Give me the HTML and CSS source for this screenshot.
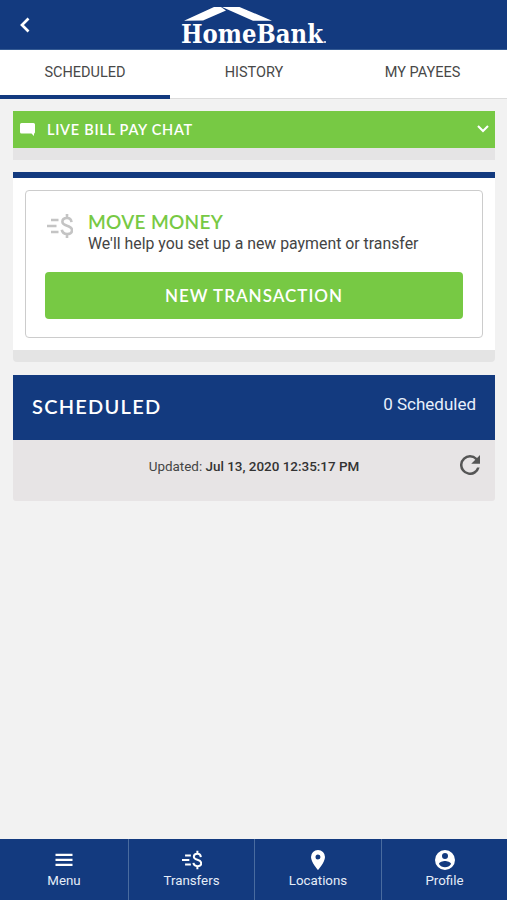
FILE: index.html
```html
<!DOCTYPE html>
<html lang="en">
<head>
<meta charset="utf-8">
<title>HomeBank Bill Pay</title>
<link rel="stylesheet" href="styles.css">
</head>
<body>
<svg class="defs" aria-hidden="true">
  <symbol id="money" viewBox="0 0 26 26">
    <g fill="none" stroke="currentColor" stroke-width="2.6">
      <path d="M4 7H11.500M0 13H9.500M4 19H11.500"/>
      <path d="M24.500 9.200C24.200 6.400 22.700 5 20 5C17 5 15.400 6.600 15.400 8.800C15.400 14 25 11.500 25 17.200C25 19.600 23 21 20.200 21C17 21 15.200 19.600 14.800 16.800M20 1V5M20 21V25"/>
    </g>
  </symbol>
</svg>
<div class="app">
  <header class="header">
    <svg class="back" viewBox="0 0 10 16"><path d="M8.500 1.500L2 8L8.500 14.500"/></svg>
    <svg class="logo" viewBox="0 0 150 46">
      <path d="M4 15.700L34 2H41L46 5.500L23 15.500ZM42 2H59.500L92 15.700H73Z"/>
      <text x="1" y="37.700" textLength="142" lengthAdjust="spacingAndGlyphs">HomeBank</text>
      <circle cx="145" cy="37" r="1"/>
    </svg>
  </header>
  <nav class="tabs">
    <a class="tab active">SCHEDULED</a>
    <a class="tab">HISTORY</a>
    <a class="tab">MY PAYEES</a>
  </nav>
  <main class="content">
    <section class="chat">
      <svg class="bubble" viewBox="0 0 15 13"><path d="M1.500 0H13.500Q15 0 15 1.500V9Q15 10.500 14 10.500V13L11.500 10.500H1.500Q0 10.500 0 9V1.500Q0 0 1.500 0Z"/></svg>
      <span class="chat-label">LIVE BILL PAY CHAT</span>
      <svg class="chevron" viewBox="0 0 12 8"><path d="M1 1L6 6L11 1"/></svg>
    </section>
    <section class="card">
      <div class="panel">
        <div class="intro">
          <svg class="money"><use href="#money"/></svg>
          <div>
            <h2 class="title">MOVE MONEY</h2>
            <p class="desc">We'll help you set up a new payment or transfer</p>
          </div>
        </div>
        <button class="button"><span>NEW TRANSACTION</span></button>
      </div>
    </section>
    <section class="scheduled">
      <div class="bar"><h2 class="bar-title">SCHEDULED</h2><span class="count">0 Scheduled</span></div>
      <div class="updated">
        <span class="stamp">Updated: <b>Jul 13, 2020 12:35:17 PM</b></span>
        <svg class="refresh" viewBox="4 4 16 16"><path d="M17.650 6.350A7.960 7.960 0 0 0 12 4a8 8 0 1 0 7.730 10h-2.080A6 6 0 1 1 12 6c1.660 0 3.140.690 4.220 1.780L13 11h7V4z"/></svg>
      </div>
    </section>
  </main>
  <footer class="footer">
    <a class="item"><svg class="icon" viewBox="0 0 20 20"><path d="M1.500 4.800H18.500M1.500 9.800H18.500M1.500 14.800H18.500" fill="none" stroke="currentColor" stroke-width="2.2"/></svg><span>Menu</span></a>
    <a class="item"><svg class="icon"><use href="#money"/></svg><span>Transfers</span></a>
    <a class="item"><svg class="icon" viewBox="2 2 20 20"><path d="M12 2a7 7 0 0 0-7 7c0 5.250 7 13 7 13s7-7.750 7-13a7 7 0 0 0-7-7zm0 9.500a2.500 2.500 0 1 1 0-5 2.500 2.500 0 0 1 0 5z"/></svg><span>Locations</span></a>
    <a class="item"><svg class="icon" viewBox="2 2 20 20"><path d="M12 2a10 10 0 1 0 0 20 10 10 0 0 0 0-20zm0 3a3 3 0 1 1 0 6 3 3 0 0 1 0-6zm0 14.200a7.200 7.200 0 0 1-6-3.220c.03-1.990 4-3.080 6-3.080 1.990 0 5.970 1.090 6 3.080a7.200 7.200 0 0 1-6 3.220z"/></svg><span>Profile</span></a>
  </footer>
</div>
</body>
</html>
```
FILE: styles.css
```css
* { box-sizing: border-box; }
body { margin: 0; font-family: Roboto, sans-serif; color: #444; background: #f2f2f2; }
h2, p { margin: 0; }
.defs { display: none; }
.app { display: flex; flex-direction: column; height: 900px; width: 507px; }
.header { height: 50px; background: #133a7f; border-bottom: 1px solid #355b94; display: grid; grid-template-columns: 180px 150px 1fr; align-items: start; }
.back { width: 10px; height: 16px; margin: 17px 0 0 20px; fill: none; stroke: #fff; stroke-width: 2.7; }
.logo { width: 150px; height: 46px; margin-top: 5px; fill: #fff; overflow: visible; }
.logo text { font: bold 26px "DejaVu Serif", serif; }
.tabs { display: grid; grid-template-columns: 170px 168px 169px; height: 49px; background: #fff; border-bottom: 1px solid #dcdcdc; }
.tab { height: 49px; text-align: center; font-size: 14.500px; line-height: 45px; color: #484848; }
.tab.active { border-bottom: 4px solid #133a7f; }
.content { flex: 1; padding: 12px 12px 0 13px; }
.chat { height: 49px; display: flex; align-items: center; padding: 0 7px 1px; background: #77c944; border-bottom: 12px solid #e5e4e5; color: #fff; }
.bubble { width: 15px; height: 13px; fill: currentColor; }
.chat-label { margin-left: 12px; font: 600 14.500px Lato, sans-serif; letter-spacing: .72px; }
.chevron { width: 12px; height: 8px; margin-left: auto; margin-right: -1px; fill: none; stroke: currentColor; stroke-width: 2.100; }
.card { margin-top: 12px; height: 190px; padding: 12px 12px 0; background: #fff; border-top: 6px solid #133a7f; border-bottom: 12px solid #e4e4e4; border-radius: 0 0 4px 4px; }
.panel { height: 148px; border: 1px solid #ccc; border-radius: 4px; padding: 20px 19px 0 19px; }
.intro { display: flex; height: 61px; }
.money { width: 26px; height: 26px; margin: 2px 15px 0 2px; color: #c4c4c4; }
.title { font: 600 19px/22px Lato, sans-serif; letter-spacing: .3px; color: #77c944; }
.desc { font-size: 15.850px; line-height: 21px; white-space: nowrap; }
.button { display: block; width: 100%; height: 47px; border: 0; border-radius: 4px; padding: 0; background: #77c944; color: #fff; font: 600 17px Lato, sans-serif; letter-spacing: 1px; }
.scheduled { margin-top: 13px; }
.bar { height: 65px; padding: 0 19px 0 19px; background: #133a7f; display: flex; justify-content: space-between; color: #fff; }
.bar-title { font: 600 20px/63px Lato, sans-serif; letter-spacing: 1.250px; }
.count { font-size: 17px; line-height: 59px; color: #e8f0fc; }
.updated { height: 61px; background: #e7e4e5; border-radius: 0 0 3px 3px; display: grid; grid-template-columns: 1fr auto 1fr; }
.stamp { grid-column: 2; font-size: 13.450px; line-height: 53px; white-space: nowrap; }
.stamp b { font-weight: 500; color: #333; }
.refresh { width: 20px; height: 20px; justify-self: end; margin: 15px 15px 0 0; fill: #555; }
.footer { height: 61px; background: #133a7f; display: grid; grid-template-columns: 128px 126px 127px 126px; }
.item { display: flex; flex-direction: column; align-items: center; padding-top: 11px; font-size: 13.300px; line-height: 16px; color: #e5edf8; border-left: 1px solid #496b9f; }
.item:first-child { border-left: 0; }
.icon { width: 20px; height: 20px; margin-bottom: 3px; color: #fff; fill: #fff; }
```
